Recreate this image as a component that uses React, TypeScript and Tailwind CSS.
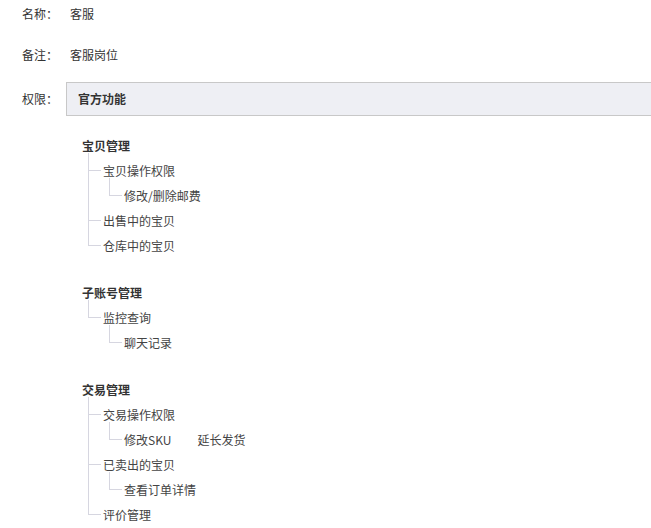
import React from "react";

type Node = { label: string; extra?: string; children?: Node[] };

const tree: Node[] = [
  {
    label: "宝贝管理",
    children: [
      { label: "宝贝操作权限", children: [{ label: "修改/删除邮费" }] },
      { label: "出售中的宝贝" },
      { label: "仓库中的宝贝" },
    ],
  },
  {
    label: "子账号管理",
    children: [{ label: "监控查询", children: [{ label: "聊天记录" }] }],
  },
  {
    label: "交易管理",
    children: [
      { label: "交易操作权限", children: [{ label: "修改SKU", extra: "延长发货" }] },
      { label: "已卖出的宝贝", children: [{ label: "查看订单详情" }] },
      { label: "评价管理" },
    ],
  },
];

function Children({ items }: { items: Node[] }) {
  return (
    <div className="ml-[6px] flex flex-col">
      {items.map((n, i) => (
        <TreeItem key={n.label} node={n} first={i === 0} last={i === items.length - 1} />
      ))}
    </div>
  );
}

function TreeItem({ node, first, last }: { node: Node; first: boolean; last: boolean }) {
  return (
    <div className="flex">
      <div className={first ? "-mt-[5px] flex w-[13px] shrink-0 flex-col" : "flex w-[13px] shrink-0 flex-col"}>
        <div
          className={
            first
              ? "h-[18px] shrink-0 border-b border-l border-[#d6d6e0]"
              : "h-[13px] shrink-0 border-b border-l border-[#d6d6e0]"
          }
        />
        {!last && <div className="flex-1 border-l border-[#d6d6e0]" />}
      </div>
      <div className="ml-[2px] flex flex-col">
        <div className="flex h-[25px] items-center text-[12px] text-[#444]">
          <span>{node.label}</span>
          {node.extra && <span className="ml-[26px]">{node.extra}</span>}
        </div>
        {node.children && <Children items={node.children} />}
      </div>
    </div>
  );
}

export default function App() {
  return (
    <div
      className="min-h-[528px] w-[651px] overflow-hidden bg-white"
      style={{ fontFamily: '"Noto Sans CJK SC", "Noto Sans", sans-serif' }}
    >
      <div className="flex flex-col gap-[13px] pl-[22px]">
        <div className="flex h-[28px] items-center text-[12px] text-[#333]">
          <span className="w-[44px] shrink-0">名称：</span>
          <span className="pl-[4px]">客服</span>
        </div>
        <div className="flex h-[28px] items-center text-[12px] text-[#333]">
          <span className="w-[44px] shrink-0">备注：</span>
          <span className="pl-[4px]">客服岗位</span>
        </div>
        <div className="flex items-center text-[12px] text-[#333]">
          <span className="w-[44px] shrink-0">权限：</span>
          <div className="flex h-[34px] flex-1 items-center border border-r-0 border-[#c8c8c8] bg-[#eeeff4] pl-[11px] font-bold text-[#333]">
            官方功能
          </div>
        </div>
      </div>
      <div className="mt-[18px] flex flex-col gap-[23px] pl-[82px]">
        {tree.map((g) => (
          <div key={g.label} className="flex flex-col">
            <div className="flex h-[24px] items-center text-[12px] font-bold text-[#333]">{g.label}</div>
            {g.children && <Children items={g.children} />}
          </div>
        ))}
      </div>
    </div>
  );
}
